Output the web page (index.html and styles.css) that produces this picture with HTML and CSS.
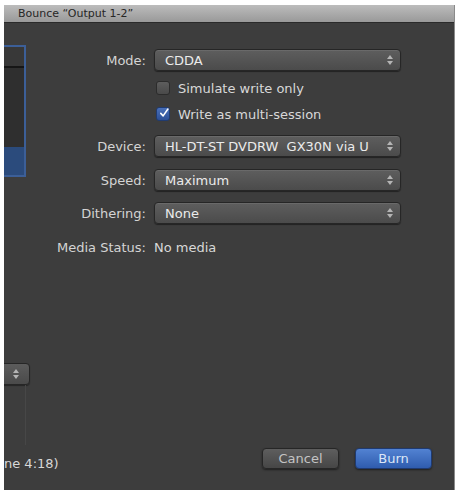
FILE: index.html
```html
<!DOCTYPE html>
<html>
<head>
<meta charset="utf-8">
<link rel="stylesheet" href="styles.css">
</head>
<body>
<div class="window">
  <div class="titlebar"><span class="title">Bounce “Output 1-2”</span></div>
  <div class="content">
    <div class="side">
      <div class="listbox">
        <div class="list-head"></div>
        <div class="list-body"></div>
        <div class="list-sel"></div>
      </div>
      <div class="mini-popup">
        <span class="arrows"><span class="up"></span><span class="down"></span></span>
      </div>
      <div class="vline"></div>
    </div>
    <div class="form">
      <div class="row r-mode">
        <span class="label">Mode:</span>
        <div class="popup"><span class="val">CDDA</span><span class="arrows"><span class="up"></span><span class="down"></span></span></div>
      </div>
      <div class="row r-check">
        <span class="label"></span>
        <label class="check"><span class="box"></span><span class="ctext">Simulate write only</span></label>
      </div>
      <div class="row r-check r-check2">
        <span class="label"></span>
        <label class="check"><span class="box on"><svg viewBox="0 0 14 14" width="14" height="14"><path d="M2.5 7.5 L5.8 11 L12.5 1.5" fill="none" stroke="#ffffff" stroke-width="2.2" stroke-linecap="round" stroke-linejoin="round"/></svg></span><span class="ctext">Write as multi-session</span></label>
      </div>
      <div class="row r-device">
        <span class="label">Device:</span>
        <div class="popup"><span class="val">HL-DT-ST DVDRW&nbsp; GX30N via U</span><span class="arrows"><span class="up"></span><span class="down"></span></span></div>
      </div>
      <div class="row r-speed">
        <span class="label">Speed:</span>
        <div class="popup"><span class="val">Maximum</span><span class="arrows"><span class="up"></span><span class="down"></span></span></div>
      </div>
      <div class="row r-dith">
        <span class="label">Dithering:</span>
        <div class="popup"><span class="val">None</span><span class="arrows"><span class="up"></span><span class="down"></span></span></div>
      </div>
      <div class="row r-media">
        <span class="label">Media Status:</span>
        <span class="status">No media</span>
      </div>
    </div>
  </div>
  <div class="footer">
    <span class="time">ne 4:18)</span>
    <div class="buttons">
      <button class="btn cancel">Cancel</button>
      <button class="btn burn">Burn</button>
    </div>
  </div>
</div>
</body>
</html>
```
FILE: styles.css
```css
html, body {
  margin: 0;
  padding: 0;
  background: #ffffff;
}
body {
  font-family: "DejaVu Sans", "Liberation Sans", sans-serif;
  font-size: 13px;
}
.window {
  margin: 5px 0 0 4px;
  width: 451px;
  height: 485px;
  background: #3d3d3d;
  display: flex;
  flex-direction: column;
  overflow: hidden;
  border-right: 1px solid #8a8a8a;
  box-sizing: border-box;
}
.titlebar {
  height: 18px;
  flex: none;
  background: linear-gradient(#bcbcbc, #999999);
  border-bottom: 1px solid #2a2a2a;
  box-sizing: border-box;
  display: flex;
  align-items: center;
  padding-left: 14px;
}
.title {
  font-size: 11px;
  color: #262626;
}
.content {
  display: flex;
  flex: 1;
}
.side {
  width: 27px;
  flex: none;
  display: flex;
  flex-direction: column;
  overflow: hidden;
}
.listbox {
  margin-top: 22px;
  margin-left: -10px;
  width: 32px;
  height: 132px;
  border: 2px solid #3c5f98;
  border-left: none;
  box-sizing: border-box;
  display: flex;
  flex-direction: column;
  background: #2f2f2f;
}
.list-head {
  height: 19px;
  background: #383838;
  border-bottom: 2px solid #161616;
}
.list-body {
  flex: 1;
}
.list-sel {
  height: 28px;
  background: #2b4b7c;
}
.mini-popup {
  margin-top: 186px;
  margin-left: -20px;
  width: 46px;
  height: 22px;
  box-sizing: border-box;
  border: 1px solid #262626;
  border-radius: 4px;
  background: linear-gradient(#5c5c5c, #4a4a4a);
  box-shadow: 0 1px 1px rgba(0,0,0,0.4);
  display: flex;
  align-items: center;
  justify-content: flex-end;
  padding-right: 8px;
}
.vline {
  margin-left: 21px;
  width: 1px;
  height: 60px;
  background: #474747;
}
.form {
  display: flex;
  flex-direction: column;
  padding-top: 26px;
  margin-left: -27px;
}
.row {
  display: flex;
  align-items: center;
  gap: 8px;
}
.label {
  width: 142px;
  flex: none;
  text-align: right;
  color: #d4d4d4;
}
.popup {
  width: 247px;
  height: 22px;
  box-sizing: border-box;
  border: 1px solid #262626;
  border-radius: 4px;
  background: linear-gradient(#5e5e5e, #4b4b4b);
  box-shadow: 0 1px 1px rgba(0,0,0,0.45), inset 0 1px 0 rgba(255,255,255,0.08);
  display: flex;
  align-items: center;
  padding: 0 5px 0 10px;
  color: #ebebeb;
}
.val {
  flex: 1;
  white-space: nowrap;
  overflow: hidden;
}
.arrows {
  display: flex;
  flex-direction: column;
  align-items: center;
  gap: 2px;
  width: 10px;
  margin-left: 3px;
}
.up, .down {
  width: 0;
  height: 0;
  border-left: 3px solid transparent;
  border-right: 3px solid transparent;
}
.up {
  border-bottom: 4px solid #b5b5b5;
}
.down {
  border-top: 4px solid #b5b5b5;
}
.r-check {
  margin-top: 8px;
  height: 18px;
}
.r-check2 {
  margin-top: 8px;
}
.check {
  display: flex;
  align-items: center;
  gap: 8px;
  margin-left: 2px;
}
.box {
  width: 14px;
  height: 14px;
  box-sizing: border-box;
  border: 1px solid #2c2c2c;
  border-radius: 3px;
  background: linear-gradient(#5d5d5d, #4a4a4a);
  display: flex;
  align-items: center;
  justify-content: center;
}
.box.on {
  background: linear-gradient(#4a70b8, #2c4f96);
  border-color: #203b70;
  overflow: visible;
}
.box.on svg {
  margin-top: -3px;
  margin-left: 2px;
}
.ctext {
  color: #d8d8d8;
}
.r-device {
  margin-top: 12px;
}
.r-speed {
  margin-top: 12px;
}
.r-dith {
  margin-top: 11px;
}
.r-media {
  margin-top: 14px;
  height: 18px;
}
.status {
  color: #d8d8d8;
}
.footer {
  flex: none;
  height: 42px;
  display: flex;
  align-items: flex-start;
  justify-content: space-between;
  padding-right: 22px;
}
.time {
  margin-left: 0;
  margin-top: 8px;
  color: #d8d8d8;
}
.buttons {
  display: flex;
  gap: 16px;
}
.btn {
  width: 77px;
  height: 21px;
  box-sizing: border-box;
  border-radius: 4px;
  font-family: "DejaVu Sans", "Liberation Sans", sans-serif;
  font-size: 13px;
  padding: 0;
  box-shadow: 0 1px 2px rgba(0,0,0,0.5);
}
.cancel {
  border: 1px solid #262626;
  background: linear-gradient(#5e5e5e, #464646);
  color: #c4c4c4;
}
.burn {
  border: 1px solid #1f3a70;
  background: linear-gradient(#5282d2, #2f5cae);
  color: #dbe6f7;
}
```
